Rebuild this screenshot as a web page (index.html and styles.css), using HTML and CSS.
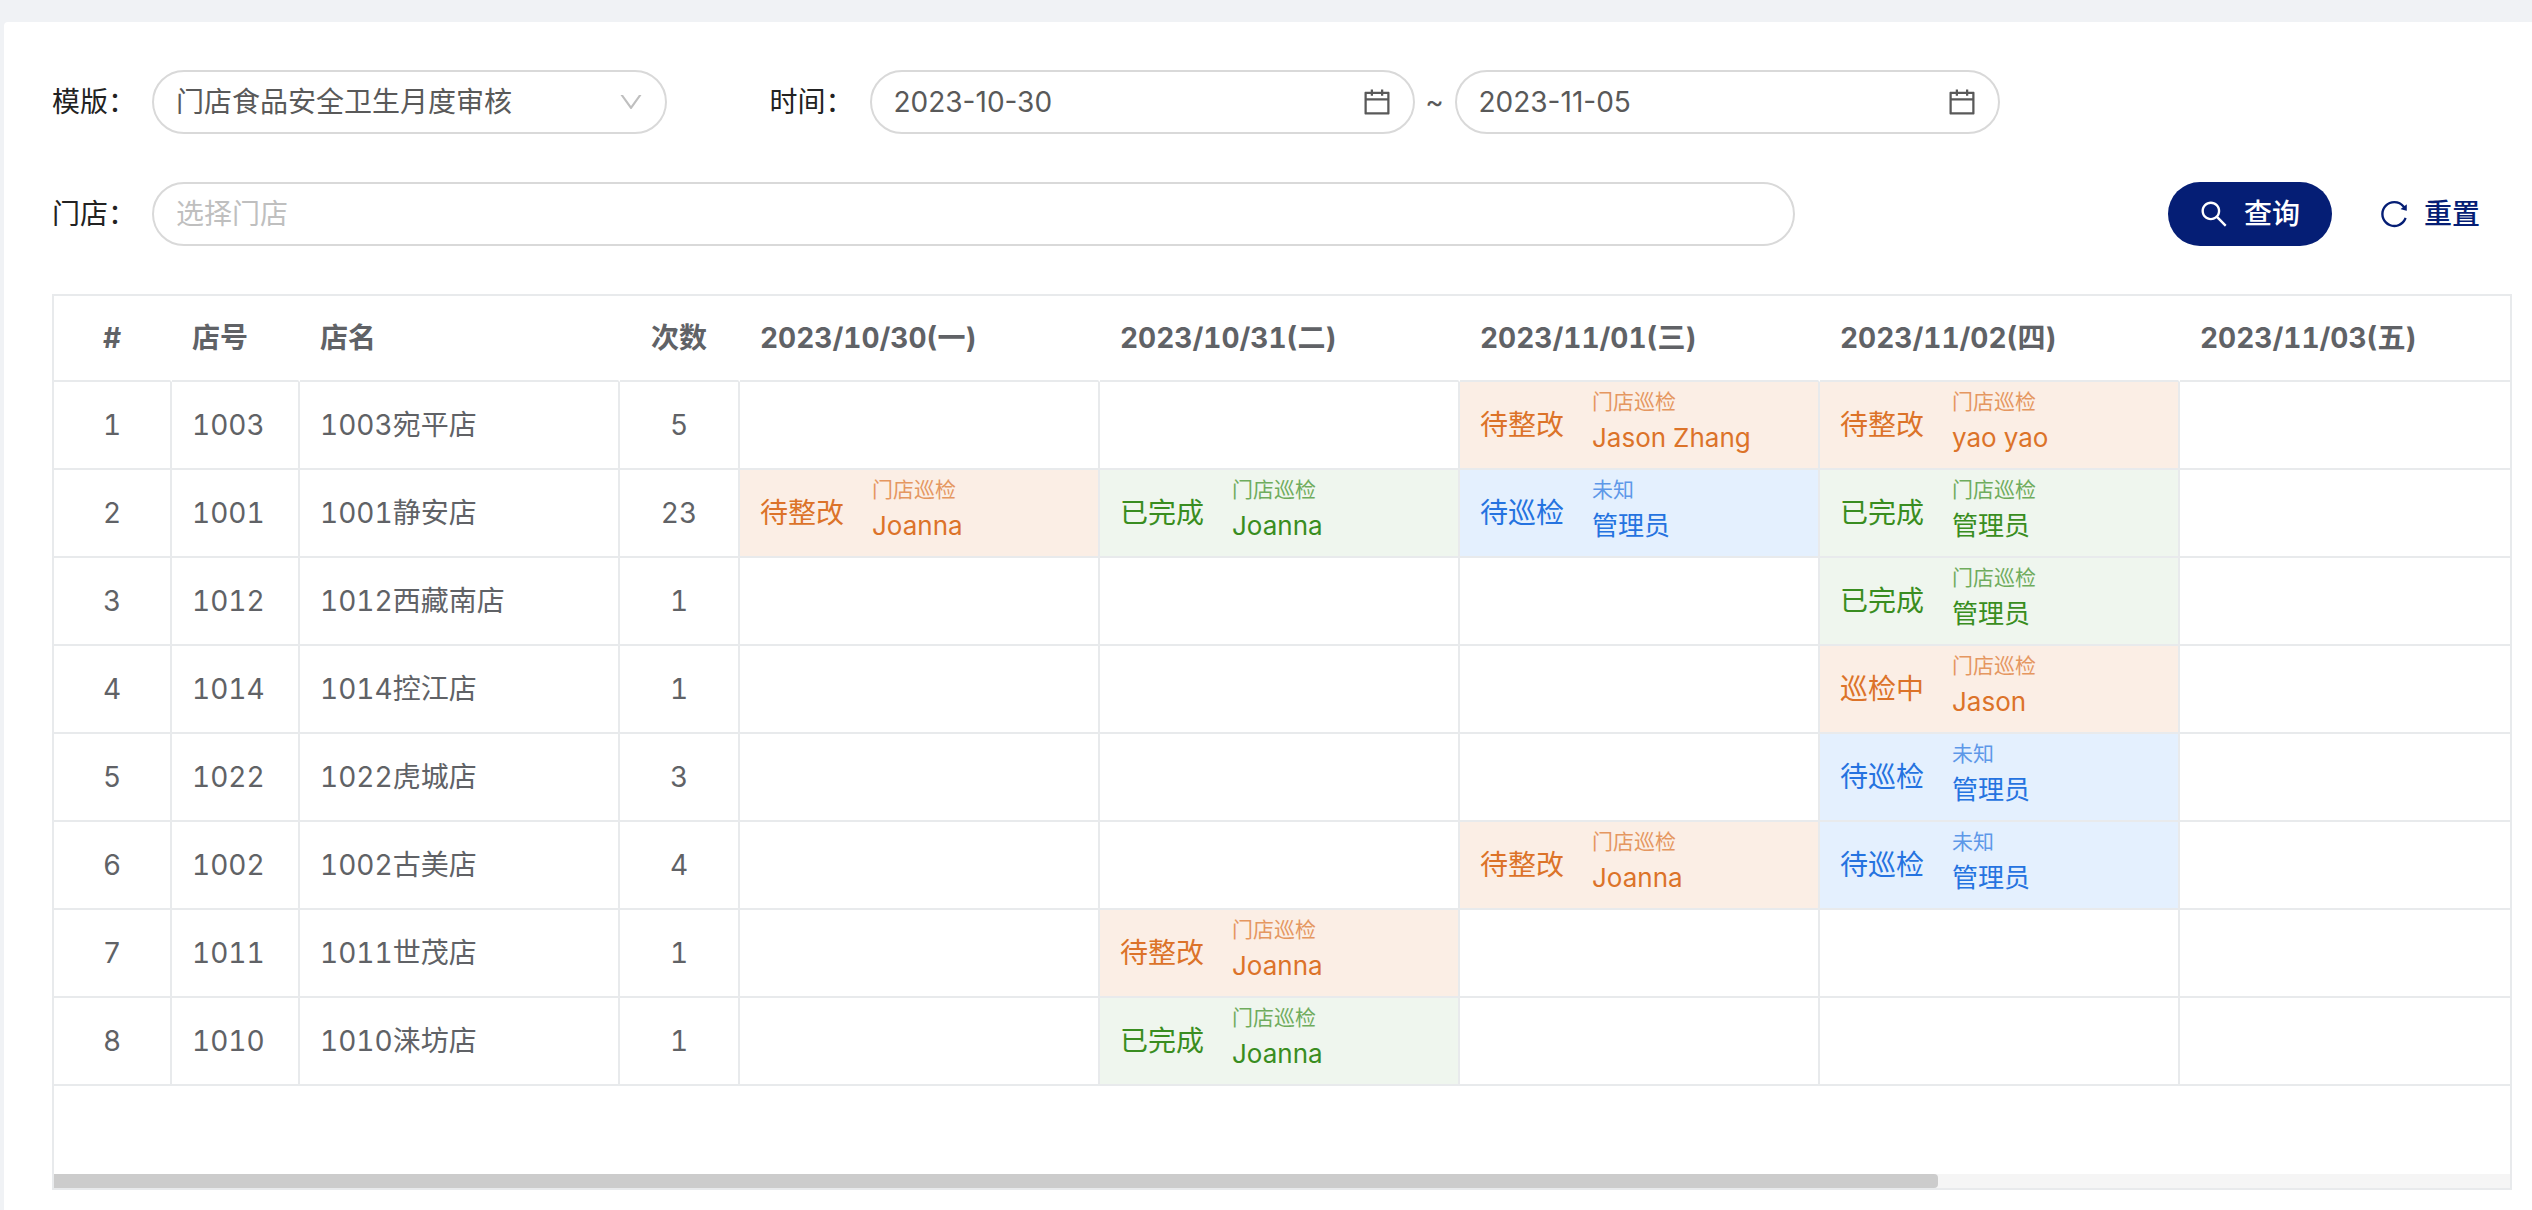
FILE: index.html
```html
<!DOCTYPE html>
<html lang="zh-CN">
<head>
<meta charset="utf-8">
<title>门店巡检</title>
<link rel="stylesheet" href="styles.css">
</head>
<body>
<svg class="sprite" aria-hidden="true">
  <symbol id="i-down" viewBox="0 0 1024 1024"><path d="M884 256h-75c-5.100 0-9.900 2.500-12.900 6.600L512 654.200 227.900 262.600c-3-4.100-7.800-6.600-12.900-6.600h-75c-6.500 0-10.300 7.400-6.500 12.700l352.600 486.100c12.800 17.600 39 17.600 51.700 0l352.600-486.100c3.900-5.300.1-12.700-6.400-12.700z"/></symbol>
  <symbol id="i-search" viewBox="0 0 1024 1024"><path d="M909.600 854.500L649.900 594.800C690.200 542.700 712 479 712 412c0-80.200-31.300-155.400-87.900-212.100-56.600-56.700-132-87.900-212.100-87.900s-155.500 31.300-212.100 87.900C143.200 256.500 112 331.800 112 412c0 80.100 31.300 155.500 87.900 212.100C256.500 680.800 331.800 712 412 712c67 0 130.600-21.800 182.700-62l259.700 259.600a8.200 8.200 0 0 0 11.600 0l43.600-43.500a8.200 8.200 0 0 0 0-11.600zM570.400 570.400C528 612.700 471.800 636 412 636s-116-23.300-158.400-65.600C211.300 528 188 471.800 188 412s23.300-116.100 65.600-158.400C296 211.300 352.200 188 412 188s116.100 23.200 158.400 65.600S636 352.200 636 412s-23.300 116.100-65.600 158.400z"/></symbol>
  <symbol id="i-calendar" viewBox="0 0 1024 1024"><path d="M880 184H712v-64c0-4.400-3.600-8-8-8h-56c-4.400 0-8 3.600-8 8v64H384v-64c0-4.400-3.600-8-8-8h-56c-4.400 0-8 3.600-8 8v64H144c-17.700 0-32 14.300-32 32v664c0 17.700 14.300 32 32 32h736c17.700 0 32-14.300 32-32V216c0-17.700-14.300-32-32-32zm-40 656H184V460h656v380zM184 392V256h128v48c0 4.400 3.600 8 8 8h56c4.400 0 8-3.600 8-8v-48h256v48c0 4.400 3.600 8 8 8h56c4.400 0 8-3.600 8-8v-48h128v136H184z"/></symbol>
  <symbol id="i-reload" viewBox="0 0 1024 1024"><path d="M909.100 209.300l-56.400 44.100C775.800 155.100 656.200 92 521.900 92 290 92 102.300 279.500 102 511.500 101.700 743.700 289.800 932 521.900 932c181.300 0 335.800-115 394.600-276.100 1.500-4.200-.7-8.900-4.900-10.300l-56.700-19.500a8 8 0 0 0-10.100 4.800c-1.800 5-3.800 10-5.900 14.900-17.300 41-42.100 77.800-73.700 109.400A344.770 344.770 0 0 1 655.900 829c-42.300 17.900-87.400 27-133.800 27-46.500 0-91.500-9.100-133.800-27A341.500 341.500 0 0 1 279 755.200a342.160 342.160 0 0 1-73.700-109.400c-17.900-42.400-27-87.400-27-133.900s9.100-91.500 27-133.900c17.300-41 42.100-77.800 73.700-109.400 31.600-31.600 68.400-56.400 109.300-73.800 42.300-17.900 87.400-27 133.800-27 46.500 0 91.500 9.100 133.800 27a341.500 341.500 0 0 1 109.300 73.800c9.900 9.900 19.200 20.400 27.800 31.400l-60.200 47a8 8 0 0 0 3 14.100l175.600 43c5 1.200 9.900-2.600 9.900-7.700l.8-180.900c-.1-6.600-7.800-10.300-13-6.200z"/></symbol>
</svg>
<main class="card">
  <form class="filters">
    <div class="field field-template">
      <label for="template">模版：</label>
      <div class="control">
        <select id="template"><option>门店食品安全卫生月度审核</option></select>
        <svg class="icon icon-down"><use href="#i-down"/></svg>
      </div>
    </div>
    <div class="field field-time">
      <label id="time-label" for="start">时间：</label>
      <div class="control">
        <input id="start" type="text" value="2023-10-30">
        <svg class="icon"><use href="#i-calendar"/></svg>
      </div>
      <span class="tilde">~</span>
      <div class="control">
        <input type="text" value="2023-11-05" aria-labelledby="time-label">
        <svg class="icon"><use href="#i-calendar"/></svg>
      </div>
    </div>
    <div class="field field-store">
      <label for="store">门店：</label>
      <div class="control"><input id="store" type="text" placeholder="选择门店"></div>
    </div>
    <div class="actions">
      <button class="btn btn-primary" type="button"><svg class="icon"><use href="#i-search"/></svg>查询</button>
      <button class="btn" type="button"><svg class="icon"><use href="#i-reload"/></svg>重置</button>
    </div>
  </form>

  <div class="table-wrap">
    <table>
      <colgroup><col class="c-index"><col class="c-code"><col class="c-name"><col class="c-count"><col class="c-day"><col class="c-day"><col class="c-day"><col class="c-day"><col></colgroup>
      <thead>
        <tr><th class="center">#</th><th>店号</th><th>店名</th><th class="center">次数</th><th>2023/10/30(一)</th><th>2023/10/31(二)</th><th>2023/11/01(三)</th><th>2023/11/02(四)</th><th>2023/11/03(五)</th></tr>
      </thead>
      <tbody>
        <tr><td class="center">1</td><td>1003</td><td>1003宛平店</td><td class="center">5</td><td></td><td></td>
          <td class="fix"><div class="task"><span>待整改</span><div><small>门店巡检</small><b>Jason Zhang</b></div></div></td>
          <td class="fix"><div class="task"><span>待整改</span><div><small>门店巡检</small><b>yao yao</b></div></div></td><td></td></tr>
        <tr><td class="center">2</td><td>1001</td><td>1001静安店</td><td class="center">23</td>
          <td class="fix"><div class="task"><span>待整改</span><div><small>门店巡检</small><b>Joanna</b></div></div></td>
          <td class="done"><div class="task"><span>已完成</span><div><small>门店巡检</small><b>Joanna</b></div></div></td>
          <td class="todo"><div class="task"><span>待巡检</span><div><small>未知</small><b>管理员</b></div></div></td>
          <td class="done"><div class="task"><span>已完成</span><div><small>门店巡检</small><b>管理员</b></div></div></td><td></td></tr>
        <tr><td class="center">3</td><td>1012</td><td>1012西藏南店</td><td class="center">1</td><td></td><td></td><td></td>
          <td class="done"><div class="task"><span>已完成</span><div><small>门店巡检</small><b>管理员</b></div></div></td><td></td></tr>
        <tr><td class="center">4</td><td>1014</td><td>1014控江店</td><td class="center">1</td><td></td><td></td><td></td>
          <td class="fix"><div class="task"><span>巡检中</span><div><small>门店巡检</small><b>Jason</b></div></div></td><td></td></tr>
        <tr><td class="center">5</td><td>1022</td><td>1022虎城店</td><td class="center">3</td><td></td><td></td><td></td>
          <td class="todo"><div class="task"><span>待巡检</span><div><small>未知</small><b>管理员</b></div></div></td><td></td></tr>
        <tr><td class="center">6</td><td>1002</td><td>1002古美店</td><td class="center">4</td><td></td><td></td>
          <td class="fix"><div class="task"><span>待整改</span><div><small>门店巡检</small><b>Joanna</b></div></div></td>
          <td class="todo"><div class="task"><span>待巡检</span><div><small>未知</small><b>管理员</b></div></div></td><td></td></tr>
        <tr><td class="center">7</td><td>1011</td><td>1011世茂店</td><td class="center">1</td><td></td>
          <td class="fix"><div class="task"><span>待整改</span><div><small>门店巡检</small><b>Joanna</b></div></div></td><td></td><td></td><td></td></tr>
        <tr><td class="center">8</td><td>1010</td><td>1010涞坊店</td><td class="center">1</td><td></td>
          <td class="done"><div class="task"><span>已完成</span><div><small>门店巡检</small><b>Joanna</b></div></div></td><td></td><td></td><td></td></tr>
      </tbody>
    </table>
    <div class="scrollbar"><div class="thumb" style="width: 76.7%"></div></div>
  </div>
</main>
</body>
</html>
```

FILE: styles.css
```css
* { box-sizing: border-box; }

body {
  margin: 0;
  padding: 22px 0 0 4px;
  min-height: 100vh;
  display: flex;
  background: #f0f2f5;
  color: #606266;
  font: 28px/40px Inter, "Noto Sans CJK SC", sans-serif;
}

.sprite { display: none; }

.card {
  flex: 1;
  min-width: 0;
  padding: 48px 20px 20px 48px;
  background: #fff;
  border-radius: 4px 0 0 0;
}

/* Filters */
.filters {
  display: grid;
  grid-template-columns: repeat(24, minmax(0, 1fr));
  row-gap: 48px;
  margin-bottom: 48px;
}
.field { display: flex; align-items: center; }
.field-template { grid-column: 1 / span 6; }
.field-time { grid-column: 8 / span 12; }
.field-store { grid-column: 1 / span 17; }

label { flex: 0 0 100px; color: #222; white-space: nowrap; }

.control {
  flex: 1;
  min-width: 0;
  height: 64px;
  display: flex;
  align-items: center;
  padding: 0 20px 0 22px;
  border: 2px solid #d9d9d9;
  border-radius: 32px;
  color: #595959;
}
.control input,
.control select {
  flex: 1;
  min-width: 0;
  padding: 0;
  border: 0;
  outline: 0;
  background: none;
  appearance: none;
  color: inherit;
  font: inherit;
}
.control input::placeholder { color: #bfbfbf; }

.tilde { flex: 0 0 40px; text-align: center; color: #595959; }

.icon { flex: none; width: 32px; height: 32px; fill: currentColor; }
.icon-down { width: 28px; height: 28px; color: #bfbfbf; }

.actions {
  grid-column: 18 / -1;
  display: flex;
  justify-content: flex-end;
  gap: 16px;
}
.btn {
  height: 64px;
  display: flex;
  align-items: center;
  gap: 14px;
  padding: 0 32px 0 30px;
  border: 0;
  border-radius: 32px;
  background: none;
  color: #051e75;
  font: inherit;
  font-weight: 500;
}
.btn-primary { background: #051e75; color: #fff; }

/* Schedule table */
.table-wrap { border: 2px solid #e8eaec; }

table {
  width: 100%;
  table-layout: fixed;
  border-collapse: separate;
  border-spacing: 0;
  font-variant-numeric: tabular-nums;
}
.c-index { width: 118px; }
.c-code { width: 128px; }
.c-name { width: 320px; }
.c-count { width: 120px; }
.c-day { width: 360px; }

th, td {
  padding: 0 20px;
  border-right: 2px solid #e8eaec;
  border-bottom: 2px solid #e8eaec;
  text-align: left;
  white-space: nowrap;
}
th { height: 86px; border-right-color: #fff; font-weight: 700; }
td { height: 88px; }
th:last-child, td:last-child { border-right: 0; }
.center { text-align: center; }

.task { display: flex; align-items: center; gap: 28px; }
.task div { padding-bottom: 6px; }
.task small, .task b { display: block; font-weight: 400; }
.task small { font-size: 21px; line-height: 32px; opacity: .7; }
.task b { font-size: 26px; line-height: 40px; }

.fix { background: #fbeee5; color: #dc7329; }
.done { background: #eff6ee; color: #398d20; }
.todo { background: #e4f0fe; color: #2573e0; }

.scrollbar { margin-top: 88px; height: 14px; background: #f5f5f5; }
.thumb { height: 14px; border-radius: 0 4px 4px 0; background: #ccc; }
```
